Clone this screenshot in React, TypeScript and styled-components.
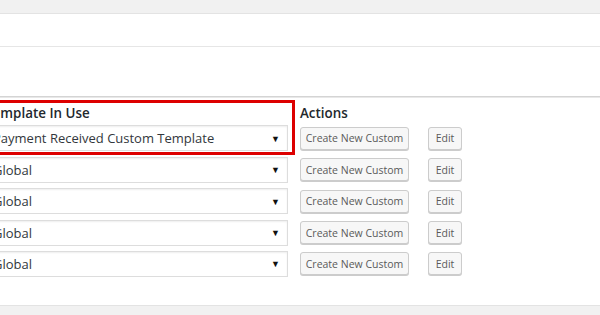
import styled, { createGlobalStyle } from "styled-components";

const GlobalStyle = createGlobalStyle`
  html, body {
    margin: 0;
    padding: 0;
    background: #f1f1f1;
    font-family: "Open Sans", "Noto Sans", sans-serif;
    overflow: hidden;
  }
`;

const Page = styled.div`
  width: 600px;
  height: 315px;
  display: flex;
  flex-direction: column;
  overflow: hidden;
`;

const TopBar = styled.div`
  height: 13px;
  background: #f1f1f1;
  border-bottom: 1px solid #e3e3e3;
`;

const Panel = styled.div`
  background: #fff;
  border-bottom: 1px solid #e3e3e3;
`;

interface BandProps {
  height: number;
  strong?: boolean;
}
const Band = styled.div<BandProps>`
  height: ${({ height }) => height}px;
  border-bottom: 1px solid ${({ strong }) => (strong ? "#d4d4d4" : "#e6e6e6")};
`;

const TableArea = styled.div`
  position: relative;
  height: 208px;
  padding-top: 5px;
  box-sizing: border-box;
  border-top: 1px solid #e8e8e8;
`;

const Grid = styled.div`
  display: grid;
  grid-template-columns: 303px auto;
  justify-content: start;
  column-gap: 12px;
  row-gap: 5.4px;
  margin-left: -15px;
  align-items: center;
`;

const HeadCell = styled.div`
  font-size: 13.4px;
  font-weight: 600;
  line-height: 20px;
  color: #23282d;
  margin-bottom: -3px;
`;

const Select = styled.div`
  height: 26px;
  box-sizing: border-box;
  display: flex;
  align-items: center;
  justify-content: space-between;
  padding: 0 7px;
  background: #fff;
  border: 1px solid #dddddd;
  box-shadow: inset 0 1px 2px rgba(0, 0, 0, 0.07);
  font-size: 13px;
  color: #32373c;
`;

const Arrow = styled.span`
  font-size: 9px;
  color: #111;
`;

const Actions = styled.div`
  display: flex;
  align-items: center;
  gap: 19px;
`;

interface ButtonProps {
  width: number;
}
const Button = styled.div<ButtonProps>`
  width: ${({ width }) => width}px;
  height: 23px;
  box-sizing: border-box;
  display: flex;
  align-items: center;
  justify-content: center;
  background: #f7f7f7;
  border: 1px solid #cccccc;
  border-radius: 3px;
  box-shadow: 0 1px 0 #cccccc;
  font-size: 10.5px;
  color: #5a5a5a;
  white-space: nowrap;
`;

const Highlight = styled.div`
  position: absolute;
  left: -10px;
  top: 2px;
  width: 305px;
  height: 55px;
  box-sizing: border-box;
  border: 3px solid #dd0000;
  pointer-events: none;
`;

const rows = ["Payment Received Custom Template", "Global", "Global", "Global", "Global"];

const Row = ({ label }: { label: string }): React.ReactElement => (
  <>
    <Select>
      <span>{label}</span>
      <Arrow>▼</Arrow>
    </Select>
    <Actions>
      <Button width={109}>Create New Custom</Button>
      <Button width={34}>Edit</Button>
    </Actions>
  </>
);

const App = (): React.ReactElement => (
  <>
    <GlobalStyle />
    <Page>
      <TopBar />
      <Panel>
        <Band height={32} />
        <Band height={49} strong />
        <TableArea>
          <Grid>
            <HeadCell>Template In Use</HeadCell>
            <HeadCell>Actions</HeadCell>
            {rows.map((label, i) => (
              <Row key={i} label={label} />
            ))}
          </Grid>
          <Highlight />
        </TableArea>
      </Panel>
    </Page>
  </>
);

export default App;
